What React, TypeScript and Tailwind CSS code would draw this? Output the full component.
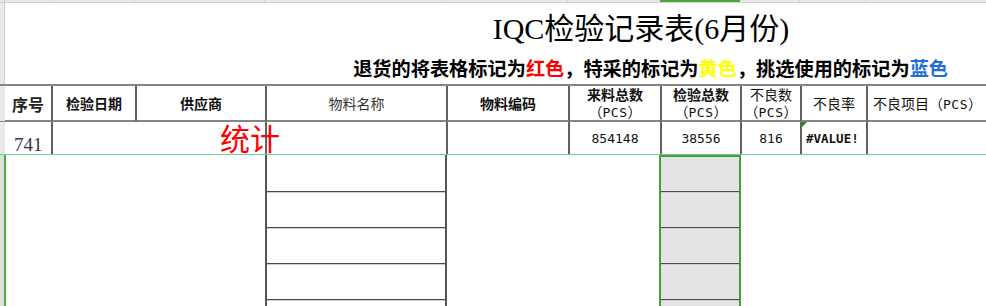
import React from "react";

const GRID =
  "grid grid-cols-[5px_46px_84px_130px_181px_122px_92px_80px_60px_66px_120px]";

function LowerCells({ fill }: { fill: boolean }) {
  const first = fill ? "h-[35px]" : "h-[37px]";
  return (
    <>
      <div className={`${first} shrink-0 border-b border-[#4a4a4a]`} />
      <div className="h-[36px] shrink-0 border-t border-b border-t-[#cfcfcf] border-b-[#4a4a4a]" />
      <div className="h-[36px] shrink-0 border-t border-b border-t-[#cfcfcf] border-b-[#4a4a4a]" />
      <div className="h-[36px] shrink-0 border-t border-b border-t-[#cfcfcf] border-b-[#4a4a4a]" />
      <div className="h-[36px] shrink-0 border-t border-t-[#cfcfcf]" />
    </>
  );
}

function Pcs() {
  return (
    <span className="text-[14px] font-normal whitespace-nowrap [font-family:'Noto_Sans_CJK_SC',sans-serif]">
      （<span className="text-[13px] tracking-[0.5px] [font-family:'DejaVu_Sans_Mono',monospace]">PCS</span>）
    </span>
  );
}

export default function App() {
  const vline = "border-l-2 border-[#626262]";
  const two = "flex flex-col items-center justify-center leading-[17px]";
  const num =
    "flex items-center justify-center pt-[2px] text-[13px] [font-family:'DejaVu_Sans_Mono',monospace]";
  return (
    <div className="w-[986px] h-[306px] overflow-hidden bg-white flex flex-col text-[#111] [font-family:'Noto_Sans_CJK_SC',sans-serif]">
      {/* top strip */}
      <div className={`${GRID} h-[3px] shrink-0 bg-[#e8e8e8] border-b border-[#d2d2d2]`}>
        <div className="border-r border-[#c8c8c8]" />
        <div className="border-r border-[#d6d6d6]" />
        <div className="border-r border-[#d6d6d6]" />
        <div className="border-r border-[#d6d6d6]" />
        <div className="border-r border-[#d6d6d6]" />
        <div className="border-r border-[#d6d6d6]" />
        <div />
        <div className="bg-[#4ea63a]" />
        <div className="border-r border-[#d6d6d6]" />
        <div className="border-r border-[#d6d6d6]" />
        <div />
      </div>

      {/* title area */}
      <div className="h-[81px] shrink-0 flex">
        <div className="w-[5px] shrink-0 bg-[#e8e8e8] border-r border-[#cfcfcf]" />
        <div className="flex-1 flex flex-col">
          <div className="ml-[336px] w-[600px] h-[30px] mt-[11px] text-center text-[30px] leading-[30px] text-black [font-family:'Liberation_Serif','Noto_Sans_CJK_SC',serif]">
            IQC检验记录表(6月份)
          </div>
          <div className="mt-[15px] h-[19px] text-right pr-[38px] text-[19.2px] leading-[19px] font-bold text-black whitespace-nowrap">
            退货的将表格标记为<span className="text-[#ff0000]">红色</span>，特采的标记为
            <span className="text-[#ffff00]">黄色</span>，挑选使用的标记为
            <span className="text-[#1f6fd6]">蓝色</span>
          </div>
        </div>
      </div>

      {/* header row */}
      <div className={`${GRID} h-[38px] shrink-0 border-t-2 border-b-2 border-[#858585]`}>
        <div className="bg-[#e8e8e8]" />
        <div className="flex items-center pl-[7px] text-[16px] font-bold text-[#222]">序号</div>
        <div className={`${vline} flex items-center justify-center text-[14px] font-bold`}>检验日期</div>
        <div className={`${vline} flex items-center justify-center text-[14px] font-bold`}>供应商</div>
        <div className={`${vline} flex items-center justify-center text-[14px] text-[#333]`}>物料名称</div>
        <div className={`${vline} flex items-center justify-center text-[14px] font-bold`}>物料编码</div>
        <div className={`${vline} ${two}`}>
          <span className="text-[14px] font-bold">来料总数</span>
          <Pcs />
        </div>
        <div className={`${vline} ${two}`}>
          <span className="text-[14px] font-bold">检验总数</span>
          <Pcs />
        </div>
        <div className={`${vline} ${two}`}>
          <span className="text-[14px]">不良数</span>
          <Pcs />
        </div>
        <div className={`${vline} flex items-center justify-center text-[14px]`}>不良率</div>
        <div className={`${vline} flex items-center pl-[5px] text-[14px] whitespace-nowrap`}>
          不良项目<Pcs />
        </div>
      </div>

      {/* data row */}
      <div className={`${GRID} h-[33px] shrink-0 border-b border-[#6fcba0]`}>
        <div className="bg-[#e8e8e8]" />
        <div className="pl-[9px] pt-[13px] text-[19px] leading-[19px] text-[#2e3648] [font-family:'Liberation_Serif',serif]">
          741
        </div>
        <div className={`${vline} col-span-3 relative flex justify-center`}>
          <div className="absolute left-[212px] top-0 bottom-0 w-[2px] bg-[#626262]" />
          <span className="relative pl-[1px] text-[30px] leading-[30px] text-[#ff0000]">统计</span>
        </div>
        <div className={vline} />
        <div className={`${vline} ${num}`}>854148</div>
        <div className={`${vline} ${num}`}>38556</div>
        <div className={`${vline} ${num}`}>816</div>
        <div className={`${vline} relative flex items-center pl-[4px] pt-[2px] text-[12.5px] font-bold [font-family:'DejaVu_Sans_Mono',monospace]`}>
          <div className="absolute left-0 top-0 w-0 h-0 border-t-[5px] border-r-[5px] border-t-[#1f8a1f] border-r-transparent" />
          #VALUE!
        </div>
        <div className={vline} />
      </div>

      {/* lower area */}
      <div className="flex flex-1 min-h-0">
        <div className="w-[6px] shrink-0 bg-[#dedede] border-r-2 border-[#4caf3a]" />
        <div className="w-[259px] shrink-0" />
        <div className="w-[182px] shrink-0 flex flex-col border-l-2 border-r-2 border-[#555]">
          <LowerCells fill={false} />
        </div>
        <div className="w-[212px] shrink-0" />
        <div className="w-[82px] shrink-0 flex flex-col border-l-2 border-r-2 border-t-2 border-[#4a9e2f] bg-[#e4e4e4]">
          <LowerCells fill={true} />
        </div>
        <div className="flex-1" />
      </div>
    </div>
  );
}
